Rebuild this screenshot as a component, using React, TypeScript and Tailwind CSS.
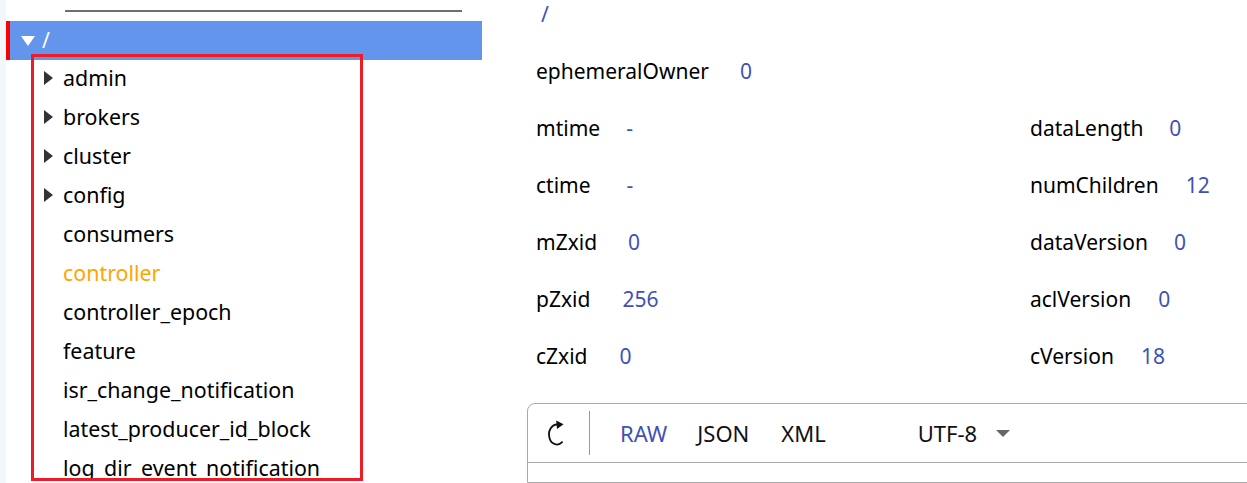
import React from "react";

const treeItems = [
  { name: "admin", hasChildren: true },
  { name: "brokers", hasChildren: true },
  { name: "cluster", hasChildren: true },
  { name: "config", hasChildren: true },
  { name: "consumers" },
  { name: "controller", active: true },
  { name: "controller_epoch" },
  { name: "feature" },
  { name: "isr_change_notification" },
  { name: "latest_producer_id_block" },
  { name: "log_dir_event_notification" },
];

type Stat = { label: string; value: string; gap: string };

const statRows: [Stat, Stat | null][] = [
  [{ label: "ephemeralOwner", value: "0", gap: "ml-[31px]" }, null],
  [
    { label: "mtime", value: "-", gap: "ml-[26px]" },
    { label: "dataLength", value: "0", gap: "ml-[26px]" },
  ],
  [
    { label: "ctime", value: "-", gap: "ml-[36px]" },
    { label: "numChildren", value: "12", gap: "ml-[27px]" },
  ],
  [
    { label: "mZxid", value: "0", gap: "ml-[31px]" },
    { label: "dataVersion", value: "0", gap: "ml-[26px]" },
  ],
  [
    { label: "pZxid", value: "256", gap: "ml-[32px]" },
    { label: "aclVersion", value: "0", gap: "ml-[27px]" },
  ],
  [
    { label: "cZxid", value: "0", gap: "ml-[32px]" },
    { label: "cVersion", value: "18", gap: "ml-[27px]" },
  ],
];

function StatCell({ stat }: { stat: Stat | null }) {
  if (!stat) return <div />;
  return (
    <div className="flex whitespace-nowrap">
      <span className="text-black">{stat.label}</span>
      <span className={`${stat.gap} text-[#3f51b5]`}>{stat.value}</span>
    </div>
  );
}

function RefreshIcon() {
  return (
    <svg width="20" height="28" viewBox="0 0 20 28" fill="none">
      <path
        d="M15.1 23.2 A8 10 0 1 1 10 5.5"
        stroke="#111"
        strokeWidth="1.8"
        strokeLinecap="round"
      />
      <polygon points="9.2,1.6 16.5,5.2 10,10" fill="#111" />
    </svg>
  );
}

export default function App() {
  return (
    <div className="relative flex h-[483px] w-[1247px] overflow-hidden bg-white font-['Noto_Sans',sans-serif] text-[21px]">
      {/* tree pane */}
      <div className="relative flex w-[482px] shrink-0">
        <div className="w-[6px] shrink-0 bg-[#f3f6fb]" />
        <div className="flex flex-1 flex-col">
          <div className="pl-[59px] pt-[10px]">
            <div className="h-[2px] w-[397px] bg-[#6e6e6e]" />
          </div>
          <div className="mt-[9px] flex h-[39px] items-center bg-[#6495ed]">
            <div className="h-full w-[4px] bg-[#ff0000]" />
            <svg className="ml-[11px]" width="14" height="10" viewBox="0 0 14 10">
              <polygon points="0,0 14,0 7,10" fill="#fff" />
            </svg>
            <span className="ml-[7px] leading-[39px] text-white">/</span>
          </div>
          {treeItems.map((item) => (
            <div key={item.name} className="flex h-[39px] shrink-0 items-start">
              <div className="ml-[38px] w-[19px] shrink-0">
                {item.hasChildren && (
                  <svg className="mt-[11px]" width="9" height="14" viewBox="0 0 9 14">
                    <polygon points="0,0 9,7 0,14" fill="#333" />
                  </svg>
                )}
              </div>
              <span
                className={`whitespace-nowrap text-[21.4px] leading-[36px] ${
                  item.active ? "text-[#ffa500]" : "text-black"
                }`}
              >
                {item.name}
              </span>
            </div>
          ))}
        </div>
        <div className="pointer-events-none absolute left-[31px] top-[54px] h-[427px] w-[332px] border-[3px] border-[#ee1c24]" />
      </div>

      {/* details pane */}
      <div className="flex flex-1 flex-col pl-[45px]">
        <div className="h-[28px] pl-[14px] leading-[28px] text-[#3f51b5]">/</div>
        <div className="mt-[15px] grid grid-cols-[494px_1fr] pl-[9px] leading-[57px]">
          {statRows.map(([left, right], i) => (
            <React.Fragment key={i}>
              <StatCell stat={left} />
              <StatCell stat={right} />
            </React.Fragment>
          ))}
        </div>
        <div className="mt-[18px] flex w-[760px] flex-1 flex-col rounded-tl-[8px] border border-[#aaaaaa]">
          <div className="flex h-[59px] shrink-0 items-center border-b border-[#aaaaaa] text-[22px] text-[#111]">
            <div className="ml-[19px] flex">
              <RefreshIcon />
            </div>
            <div className="ml-[22px] h-[44px] w-px bg-[#999]" />
            <span className="ml-[30px] text-[#3f51b5]">RAW</span>
            <span className="ml-[30px]">JSON</span>
            <span className="ml-[32px]">XML</span>
            <span className="ml-[92px]">UTF-8</span>
            <svg className="ml-[19px]" width="14" height="7" viewBox="0 0 14 7">
              <polygon points="0,0 14,0 7,7" fill="#666" />
            </svg>
          </div>
          <div className="flex-1" />
        </div>
      </div>
    </div>
  );
}
